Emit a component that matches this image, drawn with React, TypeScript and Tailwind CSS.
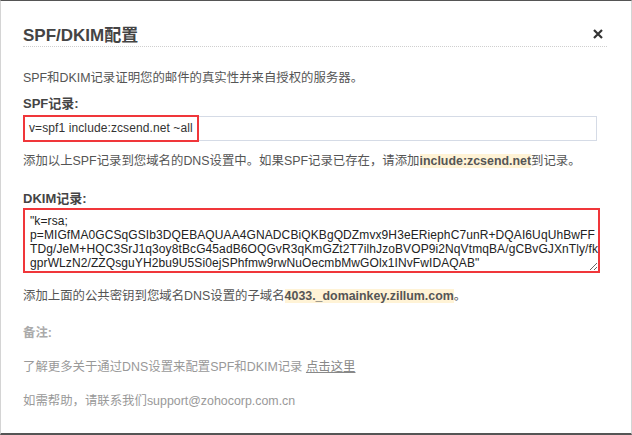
const FONT = "font-['Liberation_Sans','Noto_Sans_CJK_SC',sans-serif]";

const DKIM_TEXT = [
  '"k=rsa;',
  'p=MIGfMA0GCSqGSIb3DQEBAQUAA4GNADCBiQKBgQDZmvx9H3eERiephC7unR+DQAI6UqUhBwFF',
  'TDg/JeM+HQC3SrJ1q3oy8tBcG45adB6OQGvR3qKmGZt2T7ilhJzoBVOP9i2NqVtmqBA/gCBvGJXnTly/fk',
  'gprWLzN2/ZZQsguYH2bu9U5Si0ejSPhfmw9rwNuOecmbMwGOlx1INvFwIDAQAB"',
].join('\n');

function Mark({ children }: { children: React.ReactNode }) {
  return <span className="bg-[#fff3d6] font-bold text-[#555]">{children}</span>;
}

export default function App() {
  return (
    <div
      className={`${FONT} w-[632px] h-[435px] bg-white border-t border-t-[#555] border-b-2 border-b-[#555] border-l border-l-[#d4d4d4] border-r border-r-[#d4d4d4] pl-[22px] pr-[24px] text-[12.4px] text-[#555]`}
    >
      {/* header */}
      <div className="pt-[24px] flex items-center justify-between border-b border-dotted border-b-[#cfcfcf]">
        <h1 className="h-[21px] leading-[21px] text-[17px] font-bold text-[#444]">SPF/DKIM配置</h1>
        <svg width="10" height="10" viewBox="0 0 10 10" className="mr-[4px] mb-[4px]">
          <path d="M1 1 L9 9 M9 1 L1 9" stroke="#333" strokeWidth="2.2" />
        </svg>
      </div>

      <p className="mt-[22px] leading-[18px]">SPF和DKIM记录证明您的邮件的真实性并来自授权的服务器。</p>

      <div className="mt-[8px] leading-[18px] text-[13px] font-bold text-[#444]">SPF记录:</div>
      <div className="relative mt-[3px] w-[574px] h-[25px] border border-[#d5dbe6] pl-[5px] text-[12px] tracking-[0.1px] leading-[23px] text-[#333]">
        v=spf1 include:zcsend.net ~all
        <div className="absolute left-[-1px] top-[-2px] bottom-[-2px] w-[176px] border-2 border-[#f0363a]" />
      </div>

      <p className="mt-[11px] leading-[18px]">
        添加以上SPF记录到您域名的DNS设置中。如果SPF记录已存在，请添加<Mark>include:zcsend.net</Mark>到记录。
      </p>

      <div className="mt-[20px] leading-[18px] text-[13px] font-bold text-[#444]">DKIM记录:</div>
      <textarea
        readOnly
        value={DKIM_TEXT}
        className="block w-[577px] h-[65px] border-2 border-[#f0363a] pt-[4px] pb-0 pl-[5px] text-[12px] tracking-[0.1px] leading-[14px] text-[#222] whitespace-pre overflow-hidden outline-none"
      />

      <p className="mt-[14px] leading-[18px]">
        添加上面的公共密钥到您域名DNS设置的子域名<Mark>4033._domainkey.zillum.com</Mark>。
      </p>

      <div className="mt-[19px] leading-[18px] font-bold text-[#aaa]">备注:</div>
      <p className="mt-[16px] leading-[18px] text-[#999]">
        了解更多关于通过DNS设置来配置SPF和DKIM记录 <span className="underline text-[#888]">点击这里</span>
      </p>
      <p className="mt-[16px] leading-[18px] text-[#999]">如需帮助，请联系我们support@zohocorp.com.cn</p>
    </div>
  );
}
